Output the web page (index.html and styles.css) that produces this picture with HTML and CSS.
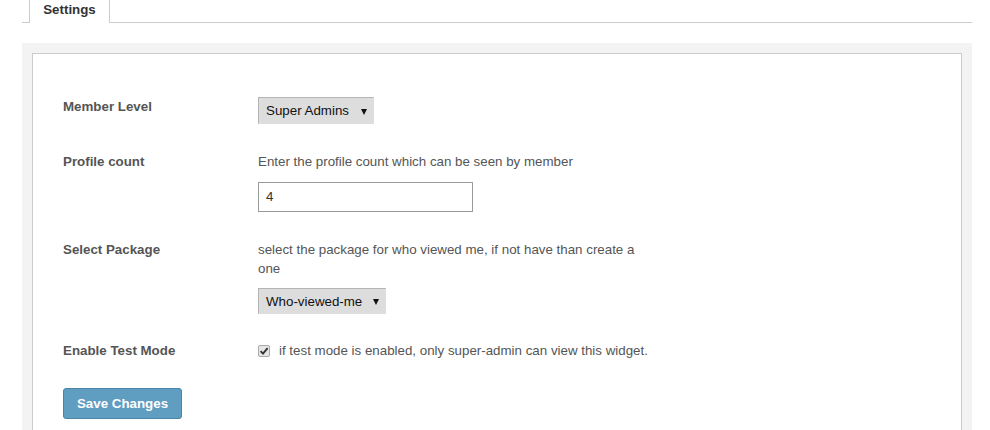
FILE: index.html
```html
<!DOCTYPE html>
<html>
<head>
<meta charset="utf-8">
<link rel="stylesheet" href="styles.css">
</head>
<body>
<div class="tabs">
  <div class="tab">Settings</div>
</div>
<div class="panel">
  <div class="box">
    <div class="row">
      <div class="label">Member Level</div>
      <div class="field">
        <div class="select sel-level"><span>Super Admins</span><span class="arrow"></span></div>
      </div>
    </div>
    <div class="row">
      <div class="label">Profile count</div>
      <div class="field">
        <div class="desc">Enter the profile count which can be seen by member</div>
        <div class="input">4</div>
      </div>
    </div>
    <div class="row">
      <div class="label">Select Package</div>
      <div class="field">
        <div class="desc">select the package for who viewed me, if not have than create a one</div>
        <div class="select sel-pkg"><span>Who-viewed-me</span><span class="arrow"></span></div>
      </div>
    </div>
    <div class="row row-check">
      <div class="label">Enable Test Mode</div>
      <div class="field check-field">
        <span class="checkbox"><svg width="10" height="10" viewBox="0 0 10 10"><path d="M1.6 5.2 L4 7.6 L8.6 2.2" fill="none" stroke="#333" stroke-width="1.9"/></svg></span>
        <span class="check-text">if test mode is enabled, only super-admin can view this widget.</span>
      </div>
    </div>
    <div class="actions">
      <button class="btn">Save Changes</button>
    </div>
  </div>
</div>
</body>
</html>
```

FILE: styles.css
```css
html, body {
  margin: 0;
  padding: 0;
  background: #ffffff;
  font-family: "Liberation Sans", Arial, sans-serif;
  font-size: 13.33px;
  color: #555555;
}

.tabs {
  margin: 0 18px 0 22px;
  height: 22px;
  border-bottom: 1px solid #cccccc;
  display: flex;
  align-items: flex-end;
}

.tab {
  margin-left: 7px;
  margin-bottom: -1px;
  height: 23px;
  width: 79px;
  box-sizing: content-box;
  border: 1px solid #cccccc;
  border-top: none;
  border-bottom: none;
  background: #ffffff;
  font-weight: bold;
  color: #333333;
  text-align: center;
  line-height: 19px;
}

.panel {
  margin: 20px 18px 0 22px;
  background: #f3f3f3;
  padding: 10px 10px 0 10px;
  height: 387px;
  box-sizing: border-box;
}

.box {
  background: #ffffff;
  border: 1px solid #cccccc;
  border-bottom: none;
  height: 100%;
  box-sizing: border-box;
  padding: 43px 30px 0 30px;
  display: flex;
  flex-direction: column;
  gap: 28px;
}

.row {
  display: flex;
  align-items: flex-start;
}

.row-check {
  margin-top: -1px;
}

.label {
  width: 195px;
  flex: none;
  font-weight: bold;
  line-height: 19px;
  color: #555555;
}

.field {
  display: flex;
  flex-direction: column;
  align-items: flex-start;
}

.desc {
  width: 392px;
  line-height: 19px;
  color: #555555;
}

.desc + .input {
  margin-top: 11px;
}

.desc + .select {
  margin-top: 10px;
}

.select {
  display: flex;
  align-items: center;
  box-sizing: border-box;
  background: #dddddd;
  border-top: 1px solid #b4b4b4;
  border-left: 1px solid #b4b4b4;
  border-right: 1px solid #dddddd;
  border-bottom: 1px solid #dddddd;
  color: #111111;
  padding: 0 6px 0 7px;
}

.sel-level {
  width: 116px;
  height: 27px;
}

.sel-pkg {
  width: 128px;
  height: 26px;
}

.arrow {
  margin-left: auto;
  width: 0;
  height: 0;
  border-left: 3px solid transparent;
  border-right: 3px solid transparent;
  border-top: 6px solid #111111;
  margin-top: 2px;
}

.input {
  box-sizing: border-box;
  width: 215px;
  height: 30px;
  border: 1px solid #9a9a9a;
  padding: 0 7px;
  line-height: 28px;
  color: #333333;
}

.check-field {
  flex-direction: row;
  align-items: center;
  height: 19px;
}

.checkbox {
  box-sizing: border-box;
  width: 12px;
  height: 12px;
  border: 1px solid #a9a9a9;
  border-radius: 2px;
  background: #e6e6e6;
  display: flex;
  align-items: center;
  justify-content: center;
  margin-top: 1px;
}

.check-text {
  margin-left: 9px;
  line-height: 19px;
}

.actions {
  display: flex;
}

.btn {
  box-sizing: border-box;
  width: 119px;
  height: 31px;
  background: #5f9dc1;
  border: 1px solid #4b83a5;
  border-radius: 3px;
  color: #ffffff;
  font-family: "Liberation Sans", Arial, sans-serif;
  font-weight: bold;
  font-size: 13.33px;
  padding: 0;
}
```
